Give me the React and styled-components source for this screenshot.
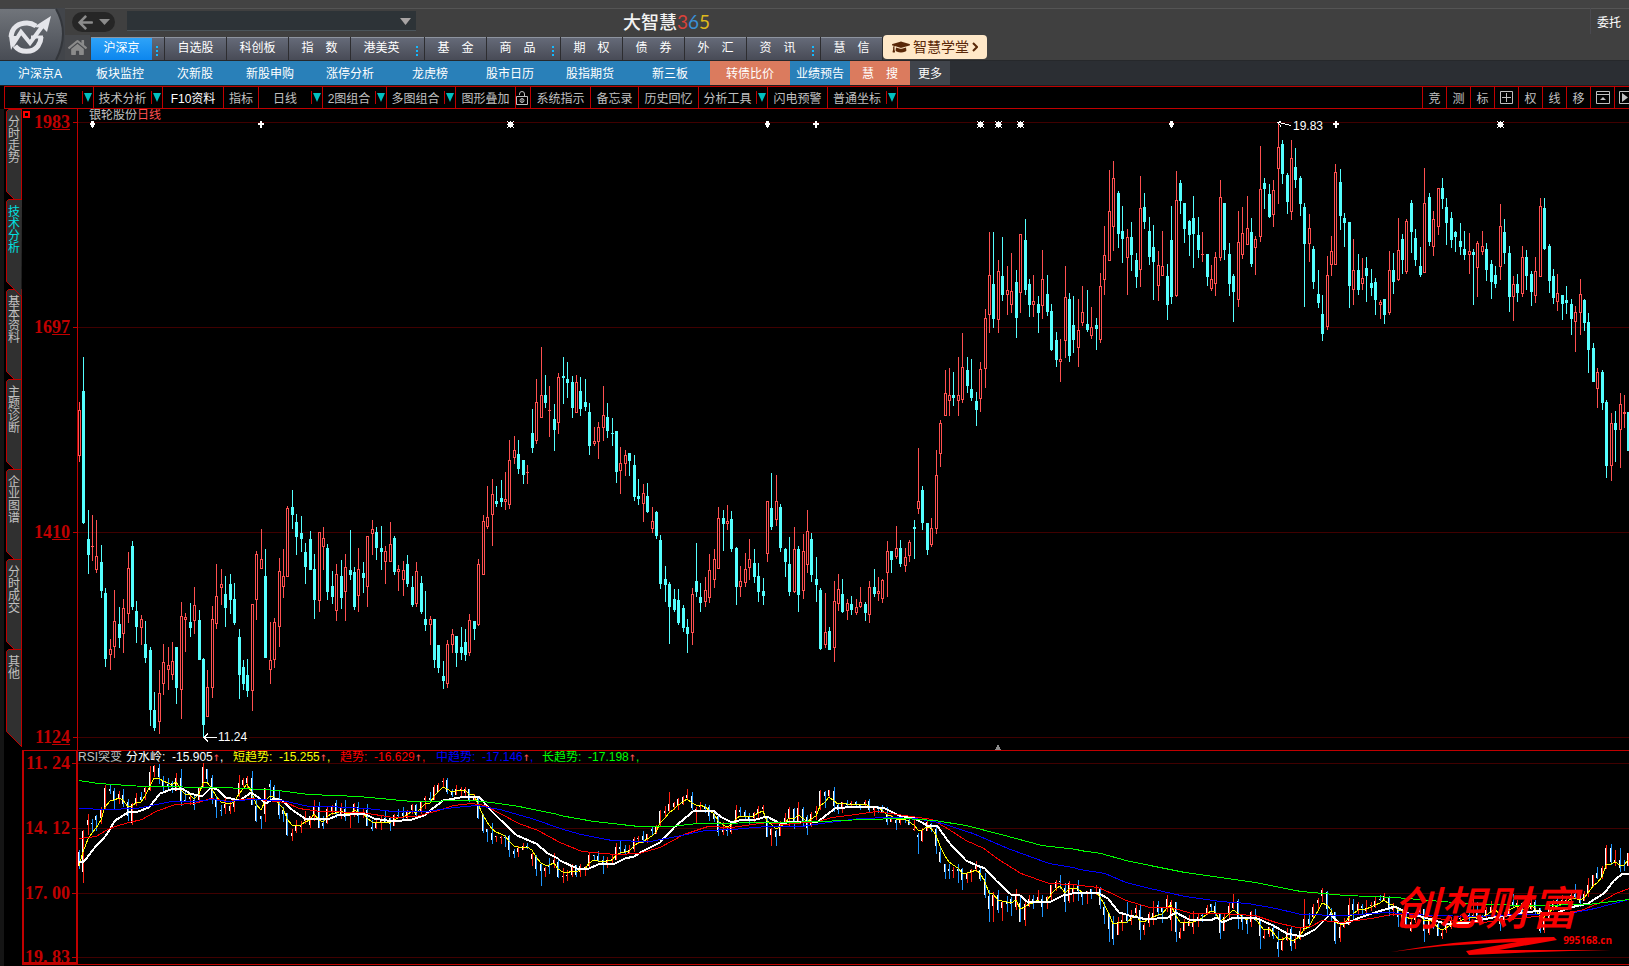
import React from "react";
import styled, { createGlobalStyle, css } from "styled-components";
import { FaArrowLeft, FaGraduationCap, FaHome } from "react-icons/fa";

const GlobalStyle = createGlobalStyle`
  * { box-sizing: border-box; }
  html, body { margin: 0; background: #000; }
  body, button, select {
    font-family: "Liberation Sans", "Noto Sans CJK SC", sans-serif;
    font-size: 12px;
  }
  button {
    margin: 0;
    padding: 0;
    border: 0;
    background: none;
    color: inherit;
    white-space: pre;
    cursor: pointer;
  }
  a { color: inherit; text-decoration: none; }
`;

const Page = styled.div`
  display: flex;
  flex-direction: column;
  height: 100vh;
  overflow: hidden;
  background: #000;
  color: #c0c0c0;
`;

/* ---------- header ---------- */

const Header = styled.header`
  display: flex;
  flex: none;
  height: 61px;
  padding-top: 8px;
  background: linear-gradient(#434343 8px, #555 8px, #555 9px, #404040 9px);
  border-bottom: 1px solid #26282b;
`;

const LogoLink = styled.a`
  flex: none;
  width: 65px;
  svg { display: block; }
`;

const HeaderMain = styled.div`
  flex: 1;
  display: flex;
  flex-direction: column;
  justify-content: space-between;
  min-width: 0;
`;

const TitleRow = styled.div`
  display: flex;
  align-items: center;
  height: 26px;
`;

const TitleLeft = styled.div`
  display: flex;
  align-items: center;
  gap: 12px;
  padding-left: 7px;
`;

const BackButton = styled.button`
  display: flex;
  align-items: center;
  justify-content: center;
  gap: 5px;
  width: 43px;
  height: 20px;
  margin-top: 2px;
  border-radius: 10px;
  background: #262626;
  color: #8c8c8c;
`;

const SearchSelect = styled.select`
  width: 289px;
  height: 20px;
  border: 0;
  border-bottom: 1px solid #4b555b;
  border-radius: 0;
  appearance: none;
  background: #2d3337;
  color: #ccc;
`;

const SearchBox = styled.div`
  display: flex;
  align-items: center;
  height: 20px;
  svg { margin-left: -16px; pointer-events: none; }
`;

const Brand = styled.h1`
  margin: 0 0 0 212px;
  color: #f2f2f2;
  font-family: "Noto Sans CJK SC", sans-serif;
  font-size: 18px;
  font-weight: 500;
  line-height: 26px;
`;

const BrandDigit = styled.span`
  color: ${({ $color }) => $color};
  font-family: Lato, sans-serif;
  font-size: 19px;
  font-weight: 400;
`;

const TradeButton = styled.button`
  margin-left: auto;
  height: 26px;
  padding: 0 8px 0 6px;
  border-left: 1px solid #4a4a50;
  color: #fff;
`;

const MarketTabs = styled.nav`
  display: flex;
  align-items: flex-end;
  gap: 1px;
  height: 26px;
`;

const HomeLink = styled.a`
  display: flex;
  align-items: center;
  justify-content: center;
  width: 25px;
  height: 25px;
  background: #46484c;
  color: #8b8b8b;
`;

const MarketTab = styled.button`
  display: flex;
  height: 23px;
  border-top: 1px solid #8d939f;
  background: linear-gradient(#656a78, #484b56);
  box-shadow: 1px 0 #2d2d30;
  color: #fff;
  line-height: 21px;
`;

const MarketName = styled.span`
  width: 61px;
  height: 22px;
  ${({ $active }) => $active && css`background: linear-gradient(#2ea3f8, #0c86ee);`}
`;

const MoreDots = styled.span`
  display: flex;
  flex-direction: column;
  gap: 2px;
  width: 12px;
  height: 22px;
  padding: 8px 0 0 4px;
  &::before, &::after, i {
    content: "";
    width: 2px;
    height: 2px;
    background: #14b9ff;
  }
`;

const SchoolLink = styled.a`
  display: flex;
  align-items: center;
  justify-content: center;
  gap: 3px;
  width: 104px;
  height: 24px;
  margin-bottom: 1px;
  border-radius: 4px;
  background: #ffe8c8;
  color: #5a2808;
  font-size: 14px;
  line-height: 24px;
`;

const SubNav = styled.nav`
  display: flex;
  flex: none;
  height: 25px;
  background: #2b2e33;
  border-bottom: 1px solid #1c1d1f;
`;

const subTones = { blue: "#2980b9", orange: "#db7b5e", gray: "#40444b" };

const SubLink = styled.a`
  width: ${({ $width }) => $width}px;
  padding-top: 1px;
  background: ${({ $tone }) => subTones[$tone]};
  color: #fff;
  line-height: 24px;
  text-align: center;
  white-space: pre;
`;

/* ---------- tool bar ---------- */

const ToolBar = styled.div`
  display: flex;
  flex: none;
  height: 23px;
  margin-left: 4px;
  border: solid #c00000;
  border-width: 1px 0 1px 1px;
`;

const Tool = styled.button`
  display: flex;
  flex: none;
  align-items: center;
  width: ${({ $width }) => $width}px;
  border-right: 1px solid #c00000;
  color: ${({ $bright }) => ($bright ? "#fff" : "#c0c0c0")};
  overflow: hidden;
`;

const ToolName = styled.span`
  flex: 1;
  text-align: center;
`;

const DropMark = styled.span`
  display: flex;
  align-items: center;
  width: 11px;
  height: 13px;
  padding-left: 1px;
  border-left: 1px solid #c00000;
`;

const SideTools = styled.div`
  display: flex;
  margin-left: auto;
  border-left: 1px solid #c00000;
`;

const SideTool = styled.button`
  display: flex;
  align-items: center;
  justify-content: ${({ $cut }) => ($cut ? "flex-start" : "center")};
  width: ${({ $cut }) => ($cut ? 14 : 24)}px;
  padding-left: ${({ $cut }) => ($cut ? 4 : 0)}px;
  border-right: ${({ $cut }) => ($cut ? 0 : 1)}px solid #c00000;
  overflow: hidden;
  svg { flex: none; }
`;

/* ---------- work area ---------- */

const Work = styled.main`
  display: flex;
  flex: 1;
  min-height: 0;
  border-left: 4px solid #151515;
  padding-left: 2px;
`;

const SideTabs = styled.nav`
  display: flex;
  flex: none;
  flex-direction: column;
  width: 16px;
`;

const SideTab = styled.button`
  position: relative;
  z-index: ${({ $active }) => ($active ? 1 : 0)};
  display: flex;
  flex: none;
  justify-content: center;
  width: 16px;
  height: 90px;
  padding-top: 7px;
  color: ${({ $active }) => ($active ? "#00e0e0" : "#c0c0c0")};
  span {
    position: relative;
    width: 12px;
    line-height: 12px;
    white-space: normal;
  }
`;

const TabShape = styled.svg`
  position: absolute;
  top: 0;
  left: 0;
`;

const Panes = styled.div`
  flex: 1;
  min-width: 0;
`;

const Pane = styled.section`
  display: grid;
  grid-template-columns: 56px 1fr;
  border-bottom: 1px solid #c00000;
`;

const Axis = styled.div`
  position: relative;
  border: solid #c00000;
  border-width: ${({ $boxed }) => ($boxed ? "0 2px 2px 2px" : "0 1px 0 0")};
`;

/* the labels sit on the price levels, so they hang free on the scale */
const AxisLabel = styled.div`
  position: absolute;
  right: ${({ $boxed }) => ($boxed ? 6 : 7)}px;
  display: flex;
  color: #c00000;
  font-family: "Liberation Serif", serif;
  font-size: 18px;
  font-weight: bold;
  line-height: 18px;
  &::after {
    content: "";
    position: absolute;
    top: 9px;
    right: ${({ $boxed }) => ($boxed ? -6 : -7)}px;
    width: 4px;
    height: 1px;
    background: #c00000;
  }
`;

const Cents = styled.span`
  height: 17px;
  border-bottom: 1px solid #c00000;
`;

const Dot = styled.span`width: 9px;`;

const PaneMark = styled.span`
  position: absolute;
  top: 2px;
  left: 1px;
  width: 7px;
  height: 7px;
  border: 2px solid #f00;
`;

const Plot = styled.div`
  position: relative;
  min-width: 0;
  overflow: hidden;
  svg { display: block; }
`;

const Legend = styled.div`
  display: flex;
  height: 12px;
  padding-left: ${({ $indent }) => $indent}px;
  line-height: 13px;
  white-space: nowrap;
`;

const LegendItem = styled.span`
  width: ${({ $width }) => $width}px;
  color: ${({ $color }) => $color};
`;

const Up = styled.span`color: #ff5050;`;

const UpArrow = styled(Up)`
  font-family: "DejaVu Sans Mono", monospace;
  line-height: 12px;
`;

const Watermark = styled.div`
  position: absolute;
  right: 12px;
  bottom: 8px;
  width: 228px;
  color: #f60000;
  strong {
    display: block;
    padding-left: 4px;
    font-family: "Noto Sans CJK SC", sans-serif;
    font-size: 46px;
    font-style: italic;
    font-weight: 500;
    line-height: 62px;
  }
  small {
    position: absolute;
    right: 5px;
    bottom: 10px;
    font-family: "Open Sans", sans-serif;
    font-size: 10px;
    font-weight: bold;
    line-height: 12px;
  }
`;

/* ---------- data ---------- */

const markets = [
  { name: "沪深京", more: true, active: true },
  { name: "自选股" },
  { name: "科创板" },
  { name: "指　数" },
  { name: "港美英", more: true },
  { name: "基　金" },
  { name: "商　品", more: true },
  { name: "期　权" },
  { name: "债　券" },
  { name: "外　汇" },
  { name: "资　讯", more: true },
  { name: "慧　信" },
];

const subLinks = [
  ["沪深京A", 80, "blue"],
  ["板块监控", 80, "blue"],
  ["次新股", 70, "blue"],
  ["新股申购", 80, "blue"],
  ["涨停分析", 80, "blue"],
  ["龙虎榜", 80, "blue"],
  ["股市日历", 80, "blue"],
  ["股指期货", 80, "blue"],
  ["新三板", 80, "blue"],
  ["转债比价", 80, "orange"],
  ["业绩预告", 60, "blue"],
  ["慧　搜", 60, "orange"],
  ["更多", 40, "gray"],
];

const tools = [
  { name: "默认方案", width: 89, drop: true },
  { name: "技术分析", width: 69, drop: true },
  { name: "F10资料", width: 61, bright: true },
  { name: "指标", width: 35 },
  { name: "日线", width: 64, drop: true },
  { name: "2图组合", width: 64, drop: true },
  { name: "多图组合", width: 69, drop: true },
  { name: "图形叠加", width: 60 },
  { name: "lock", width: 15 },
  { name: "系统指示", width: 60 },
  { name: "备忘录", width: 48 },
  { name: "历史回忆", width: 60 },
  { name: "分析工具", width: 69, drop: true },
  { name: "闪电预警", width: 60 },
  { name: "普通坐标", width: 70, drop: true },
];

const sideTabs = ["分时走势", "技术分析", "基本资料", "主题诊断", "企业图谱", "分时成交", "其他"];

const rsi = [
  ["分水岭", "-15.905", "#ffffff", 107],
  ["短趋势", "-15.255", "#ffff00", 107],
  ["趋势", "-16.629", "#ff0000", 96],
  ["中趋势", "-17.146", "#0000ff", 106],
  ["长趋势", "-17.198", "#00ff00", 107],
];

// Bars are: direction, high, body top, body bottom, low.
// Levels are in ticks (three to a pixel) counted from the block's base row.
const barBlocks = [
  [530, `r -384 -360 -223 -205;c -519 -417 -21 -18;c -60 27 75 131;r -45 48 51 93;r -30 78 119 128;
c 45 96 183 203;c 174 189 387 410;r 327 357 375 419;r 180 273 350 383;c 231 282 323 353;
r 207 234 312 368;r 66 114 251 278;c 33 48 231 239;c 213 243 291 338;r 255 267 293 344;
c 273 342 384 398;c 351 360 540 587;c 486 540 594 602;r 420 489 576 611;r 342 396 461 494;
r 351 405 419 479;r 336 393 434 449;c 351 351 474 521;r 216 258 479 566;r 249 261 269 365;
c 219 276 293 320;r 171 225 272 311;c 240 270 390 390;c 384 387 585 620;r 420 471 560 560;
r 228 267 473 503;r 102 198 281 296;r 117 162 174 224;c 138 192 234 290;c 132 162 210 251;
c 159 207 279 284;c 297 321 435 506;c 390 411 462 479;c 387 435 483 500;r 222 222 482 542;
r 63 72 209 269;r -3 87 116 116;c 57 138 384 384;r 276 390 419 461`],
  [320, `r 894 906 1020 1044;r 714 753 921 980;r 687 768 801 833;r 558 564 771 771;c 510 561 585 627;
c 582 606 651 705;c 588 639 657 696;c 669 696 741 792;c 633 657 750 750;c 702 747 840 897;
r 636 636 843 876;r 621 654 682 750;c 672 684 816 840;c 753 798 831 852;r 732 762 873 903;
c 720 768 834 867;r 702 741 816 903;c 630 750 765 780;c 741 756 861 870;r 684 747 828 876;
c 726 759 774 819;r 648 648 801 861;r 600 627 642 705;c 621 636 684 720;c 618 684 696 750;
r 678 693 726 792;r 606 672 726 726;c 648 654 756 765;r 735 747 756 813;r 723 750 780 828;
c 705 732 792 801;c 768 801 855 861;r 726 753 852 861;c 768 789 876 882;c 813 897 915 933;
r 888 897 915 975;c 897 897 1020 1044;c 975 975 1044 1059;c 1023 1068 1083 1107;r 960 972 1092 1104;
r 927 942 975 999;c 948 948 999 1041;c 921 981 999 1020;c 927 966 1005 1023;r 882 900 999 1008;
c 903 903 927 960;r 717 732 915 918;r 585 603 765 765;r 498 591 621 627;r 477 522 585 678;
c 498 543 552 561;c 480 534 546 561;r 456 537 546 570;r 360 420 555 567;r 348 390 414 432;
c 360 402 447 462;c 420 420 465 492;r 435 456 459 492;c 267 339 384 399;r 177 246 363 372;
r 81 225 294 294;c 165 225 249 264;r 198 270 273 351;c 252 297 330 393;r 159 171 309 342;
c 111 168 174 252;c 126 177 189 234;c 168 186 264 294;r 165 186 279 279;c 171 213 267 288;
c 177 246 261 273;c 249 276 378 405;r 321 363 372 378;r 306 321 366 417;r 198 285 324 363;
c 249 291 333 354;c 294 339 342 378;c 333 333 456 489;r 381 429 453 522;r 390 405 432 468;
c 399 399 423 468;c 405 435 531 543;c 477 528 537 555;r 492 519 552 606;c 489 528 576 579;
r 561 603 627 639;c 573 576 648 657;c 645 660 792 807;c 738 777 795 846;c 786 792 861 972;
c 807 837 870 876;c 807 840 909 915;c 855 864 924 936;c 897 921 942 999;
r 804 822 939 975;c 669 783 816 831;c 789 831 849 876;r 771 810 846 861;r 702 750 834 849;
r 687 717 780 804;r 561 594 747 747;c 570 594 612 693;r 555 603 612 630;c 573 597 687 696;
c 681 684 801 855;r 738 783 801 831;r 699 747 789 801;r 657 717 744 780;c 687 729 771 789;
c 729 768 816 846;c 774 813 828 855;r 543 543 702 726;c 459 564 621 630;r 465 543 600 618;
c 552 561 684 696;c 684 687 726 771;c 651 732 816 828;r 621 687 816 819;c 678 687 825 876;
r 642 693 813 837;r 570 633 735 759;c 639 657 765 786;c 711 777 795 846;c 804 810 987 990;
r 819 936 975 984;c 921 933 990 990;r 783 843 984 1026;r 762 807 852 873;c 777 822 876 879;
r 837 849 873 900;c 828 852 870 885;r 837 861 879 885;r 801 846 861 864;c 846 852 879 903;
r 783 801 885 909;c 747 801 822 831;r 771 813 822 843;r 777 780 837 849;r 663 693 759 831;
c 693 693 720 759;r 618 684 711 717;c 660 684 732 741;r 684 711 738 756;r 660 666 708 726;
c 600 621 627 717;r 384 543 567 582;c 498 510 609 630;c 609 609 690 705;r 594 624 675 681;
r 390 465 627 642;r 300 309 402 441;r 150 219 288 288;r 144 225 243 288;c 156 225 234 258;
r 111 225 243 288;r 39 141 240 249;c 111 150 198 219;c 117 207 234 243;c 216 243 270 318;
r 126 147 237 276`],
  [110, `r 597 624 777 833;r 366 495 615 669;c 366 522 627 654;r 450 483 630 669;c 381 498 555 573;
r 468 540 555 615;r 429 543 585 609;c 480 516 624 684;r 372 372 549 609;c 327 390 540 555;
c 507 522 585 621;r 495 573 585 621;c 558 582 609 669;r 420 507 588 627;c 495 552 606 618;
c 582 603 720 723;c 666 690 750 771;r 687 747 756 816;r 468 561 693 744;c 549 567 738 756;
c 558 645 690 729;r 567 660 714 771;r 528 606 639 648;c 540 642 660 666;r 591 651 678 687;
c 624 645 657 720;r 489 528 690 699;r 348 435 510 555;r 180 303 453 453;r 153 204 351 423;
c 243 249 372 414;c 288 363 387 459;r 357 381 444 555;c 336 381 435 483;c 429 450 501 534;
r 198 294 480 531;c 249 291 336 357;c 321 363 441 465;c 345 411 456 570;r 423 465 528 573;
r 363 468 498 498;c 462 498 585 630;c 288 390 561 582;r 183 270 558 561;c 210 219 273 312;
c 279 279 357 399;c 330 333 375 438;c 258 324 372 474;c 321 375 420 444;r 366 432 435 456;
c 432 432 501 528;r 465 507 537 543;r 426 441 522 558;r 210 261 444 453;c 279 279 420 450;
c 399 432 522 558;c 492 498 546 636;r 303 396 570 591;r 291 369 435 447;r 258 354 405 405;
c 324 366 462 471;r 378 387 414 495;r 108 237 381 396;c 204 219 237 297;c 222 252 321 324;
r 210 240 315 351;r 39 111 177 282;c 90 102 192 222;c 189 195 276 312;r 90 144 306 330;
c 114 171 210 234;c 198 204 282 318;c 279 291 402 591;r 312 354 402 456;c 408 417 516 537;
c 480 552 579 594;c 555 612 672 693;r 438 495 651 660;r 378 423 465 498;r 162 186 465 465;
c 177 216 318 360;c 309 324 339 411;c 336 336 528 594;r 387 480 540 585;c 432 480 540 555;
r 444 504 522 540;c 441 474 498 576;c 477 519 534 558;c 504 516 570 615;r 570 576 585 627;
c 567 567 615 642;r 423 480 609 615;c 429 480 516 552;r 324 420 510 513;c 372 387 450 492;
r 327 333 486 492;c 270 279 366 429;c 357 384 450 468;c 411 468 495 501;r 174 279 489 489;
c 249 261 396 408;r 303 327 411 438;r 234 234 351 375;c 204 234 267 297;c 264 291 339 405;
c 306 324 390 414;c 363 366 381 426;c 339 393 411 435;c 363 417 435 450;r 369 423 435 492;
c 417 426 435 585;r 393 399 474 561;r 363 408 426 435;c 399 417 480 513;c 450 462 516 567;
c 468 495 522 534;r 282 348 471 510;c 327 366 429 462;c 408 429 561 606;r 498 522 561 633;
c 492 522 549 576;r 408 441 552 561;c 420 441 498 540;c 483 492 546 588;r 441 483 558 579;
r 264 288 501 501;c 264 294 417 420;c 402 408 513 549;c 477 498 564 582;r 492 549 576 603;
c 555 555 582 630;c 528 570 579 612;c 567 582 627 675;r 588 606 636 726;r 507 552 609 675;
c 567 570 639 663;c 609 636 720 789;c 699 714 816 816;r 774 786 837 894;c 780 786 879 900;
c 870 876 1068 1104;r 909 939 1068 1113;c 903 939 960 1056;r 849 882 960 1074;r 855 906 911 954;
c 906 906 1023 1023`],
];

const PRICE_TOP = 121; // window row where the price plot starts
const PLOT_LEFT = 78;

const bars = barBlocks
  .flatMap(([base, text]) =>
    text.split(";").map((row) => {
      const [dir, ...levels] = row.trim().split(" ");
      const [high, top, bottom, low] = levels.map((v) => Math.round(base + v / 3) - PRICE_TOP);
      return { rising: dir === "r", high, top, bottom, low };
    })
  )
  .map((bar, i) => ({ ...bar, x: Math.floor(79.22 + i * 4.4405) - PLOT_LEFT }));

// Trend lines of the lower pane, in blocks of [left edge, ticks per pixel, points].
const trendLines = [
  {
    color: "#00ff00",
    width: 1,
    blocks: [
      [60, 2.613, "50,121 100,130 220,139 420,140 480,145 570,149 650,161 780,168 920,184 1080,181 1130,186 1200,198 1300,222"],
      [560, 2.904, "0,225 100,242 230,258 320,258 400,248 640,246 760,244 880,236 1000,234 1090,240 1180,256 1280,282 1400,315 1500,328"],
      [1080, 2.856, "0,330 60,340 130,360 200,376 300,395 400,412 500,426 630,454 760,466 900,470 1000,479 1140,492 1300,496 1450,492 1568,478"],
    ],
  },
  {
    color: "#0000ff",
    width: 1,
    blocks: [
      [60, 2.613, "50,203 120,208 200,203 290,184 350,183 400,178 440,182 500,177 580,181 650,197 700,199 800,205 870,214 960,213 1030,200 1090,196 1150,208 1240,237"],
      [560, 2.904, "0,265 60,283 150,301 260,304 340,287 420,270 500,266 600,259 700,258 780,246 870,234 960,232 1030,235 1100,245 1200,280 1300,325 1420,368 1490,380"],
      [1080, 2.856, "0,386 70,400 130,427 200,445 300,467 400,483 480,488 560,505 630,523 750,524 880,516 1000,524 1130,528 1250,523 1400,520 1470,505 1568,478"],
    ],
  },
  {
    color: "#ff0000",
    width: 1,
    blocks: [
      [60, 2.613, "50,295 95,288 120,270 145,257 180,245 215,236 250,212 300,192 350,188 395,175 440,182 500,174 540,180 590,187 625,205 680,213 790,216 870,230 930,228 980,212 1030,196 1075,190 1110,195 1150,220 1200,248 1250,270"],
      [560, 2.904, "0,307 65,332 100,335 160,342 230,338 290,320 360,283 430,258 500,260 560,252 600,246 650,252 750,243 790,230 860,222 920,214 980,222 1080,238 1130,268 1180,300 1230,325 1270,355 1340,400 1420,430 1490,433"],
      [1080, 2.856, "0,436 50,440 90,460 130,480 200,500 260,500 320,518 400,518 500,525 560,545 620,560 660,557 690,540 750,547 830,535 890,522 960,520 1050,540 1150,545 1250,535 1350,522 1430,510 1480,490 1530,460 1568,445"],
    ],
  },
  {
    color: "#ffffff",
    width: 2,
    blocks: [
      [60, 2.613, "50,362 64,362 90,325 120,285 143,240 178,215 205,214 232,200 262,158 290,147 318,145 340,158 370,167 395,142 410,148 435,172 470,181 500,155 515,168 537,188 560,175 580,180 610,210 640,234 700,238 725,226 795,218 820,235 870,243 920,238 950,225 1000,180 1060,168 1095,167 1120,205 1150,238 1195,285 1245,308 1275,340 1300,354"],
      [560, 2.904, "0,360 50,384 85,384 110,372 160,370 190,355 215,348 245,330 290,305 335,258 385,213 445,211 470,230 500,245 530,238 570,236 600,228 640,250 680,242 750,242 800,205 860,198 900,199 945,203 985,225 1030,235 1065,254 1095,256 1130,305 1180,360 1210,374 1235,383 1265,420 1310,462 1335,466 1355,484 1420,487 1460,465 1500,457"],
      [1080, 2.856, "0,457 55,460 80,475 110,515 140,526 190,537 250,532 275,515 310,538 370,540 390,530 405,545 440,532 500,530 550,555 590,580 635,587 670,568 715,523 740,545 765,545 800,530 850,513 900,498 940,520 985,530 1050,553 1110,547 1180,532 1240,522 1310,510 1330,524 1365,515 1400,502 1450,490 1500,455 1525,420 1550,400 1568,398"],
    ],
  },
];

const toPoints = (blocks) =>
  blocks
    .flatMap(([left, scale, text]) =>
      text.split(" ").map((pair) => {
        const [x, y] = pair.split(",").map(Number);
        return `${Math.round(left + x / scale - PLOT_LEFT)},${Math.round(y / 3 - 23) + 0.5}`;
      })
    )
    .join(" ");

// The lower pane is the price turned upside down.
const flip = (y) => Math.round(((616 - y) * 194) / 615);

const shortTrend = () => {
  let avg = null;
  return bars
    .map((bar) => {
      const close = flip(bar.rising ? bar.top : bar.bottom);
      avg = avg === null ? close : avg + (close - avg) * 0.4;
      return `${bar.x},${Math.round(avg)}`;
    })
    .join(" ");
};

/* ---------- drawings ---------- */

const Logo = () => (
  <svg width="65" height="52" viewBox="0 8 65 52" aria-hidden="true">
    <defs>
      <linearGradient id="plate" x1="0" y1="0" x2="0" y2="1">
        <stop offset="0" stopColor="#71757b" />
        <stop offset="1" stopColor="#484c54" />
      </linearGradient>
    </defs>
    <path d="M0 8H65V60H0Z" fill="#42454a" />
    <path d="M0 9H56Q70 33 56 60H0Z" fill="url(#plate)" />
    <path d="M56 9Q70 33 56 60" fill="none" stroke="#33363b" strokeWidth="2" />
    <g fill="none" stroke="#e4e5ea" strokeWidth="5">
      <path d="M11 37C12 27 19 23 27 23C31 23 33 24 36 26" />
      <path d="M15 46C20 53 33 53 38 46C40 43 41 40 41 37" />
      <path d="M12 46L21 32L30 43L44 24" strokeWidth="4" />
      <path d="M31 37H43" strokeWidth="3" />
    </g>
    <path d="M51 16L47 32L43 28L34 27L40 23Z" fill="#e4e5ea" />
    <path d="M9 36L18 36L11 50Z" fill="#e4e5ea" />
  </svg>
);

const Caret = ({ color, width = 8, height = 8 }) => (
  <svg width={width} height={height} aria-hidden="true">
    <path d={`M0 0H${width}L${width / 2} ${height}Z`} fill={color} />
  </svg>
);

const LockIcon = () => (
  <svg width="12" height="14" viewBox="0 0 12 14" fill="none" stroke="#c0c0c0" aria-hidden="true">
    <path d="M3.5 4V3Q3.5 0.5 6 0.5T8.5 3V6M0.5 5.5H11.5V13.5H0.5Z" />
    <circle cx="6" cy="9.5" r="2" />
    <path d="M6 8V11" />
  </svg>
);

const PlusBox = () => (
  <svg width="13" height="13" fill="none" stroke="#c0c0c0" aria-hidden="true">
    <path d="M0.5 0.5H12.5V12.5H0.5ZM6.5 2V11M2 6.5H11" />
  </svg>
);

const PanelBox = () => (
  <svg width="14" height="13" aria-hidden="true">
    <path d="M0.5 0.5H13.5V12.5H0.5ZM1 3.5H13" fill="none" stroke="#c0c0c0" />
    <path d="M4 9L7 6L10 9Z" fill="#c0c0c0" />
  </svg>
);

const PlayBox = () => (
  <svg width="14" height="13" aria-hidden="true">
    <path d="M0.5 0.5H13.5V12.5H0.5Z" fill="none" stroke="#c0c0c0" />
    <path d="M3 2L9 6.5L3 11Z" fill="#c0c0c0" />
  </svg>
);

const markShapes = {
  star: "M-2 -2H3V3H-2ZM-3 -3H-2V-2H-3ZM3 -3H4V-2H3ZM-3 3H-2V4H-3ZM3 3H4V4H3ZM0 -3H1V4H0ZM-3 0H4V1H-3Z",
  plus: "M0 -4H2V4H0ZM-2 -1H4V1H-2Z",
  drop: "M0 -4H1V4H0ZM-1 -3H2V3H-1ZM-2 -1H3V1H-2Z",
};

const marks = [
  ["drop", 92], ["plus", 260], ["star", 510], ["drop", 767], ["plus", 815], ["star", 980],
  ["star", 998], ["star", 1020], ["drop", 1171], ["plus", 1335], ["star", 1500],
];

const dayTicks = [79, 83, 96, 119, 141, 159, 181, 203, 225, 252, 292, 327, 363, 394, 425, 456, 487, 519, 560, 576, 598, 622, 643, 665, 687, 709, 732, 749, 772, 796, 816, 847, 869, 892, 914, 937, 958, 980, 1016, 1038, 1060, 1083, 1105, 1127, 1149, 1171, 1190, 1216, 1238, 1260, 1282, 1300, 1322, 1345, 1367, 1389, 1433, 1455, 1480, 1500, 1522, 1544, 1562, 1584, 1607];

const PriceChart = () => (
  <svg width="100%" height="629" shapeRendering="crispEdges" role="img" aria-label="日线">
    {[1, 206, 411, 616].map((y) => (
      <rect key={y} x="0" y={y} width="100%" height="1" fill="#400000" />
    ))}
    {bars.map((bar, i) => {
      const { x, high, top, bottom, low } = bar;
      const height = Math.max(bottom - top, 1);
      return bar.rising ? (
        <g key={i} fill="#ff5050">
          <rect x={x} y={high} width="1" height={top - high} />
          <rect x={x} y={bottom} width="1" height={Math.max(low - bottom, 0)} />
          {height < 3 ? (
            <rect x={x - 1} y={top} width="3" height={height} />
          ) : (
            <rect x={x - 0.5} y={top + 0.5} width="2" height={height - 1} fill="#000" stroke="#ff5050" />
          )}
        </g>
      ) : (
        <g key={i} fill="#54ffff">
          <rect x={x} y={high} width="1" height={low - high} />
          <rect x={x - 1} y={top} width="3" height={height} />
        </g>
      );
    })}
    {marks.map(([kind, x]) => (
      <path key={x} d={markShapes[kind]} transform={`translate(${x - PLOT_LEFT} 3)`} fill="#fff" />
    ))}
    <g fill="none" stroke="#fff">
      <path d="M126 616.5H139M130 612.5L126 616.5L130 620.5" />
      <path d="M1201 1.5L1213 4.5M1204 -1L1200 1.5L1203 5.5" />
    </g>
    <rect x="1214" y="0" width="31" height="9" fill="#000" />
    <rect x="139" y="611" width="32" height="11" fill="#000" />
    <g fill="#fff" fontSize="12">
      <text x="140" y="620">11.24</text>
      <text x="1215" y="9">19.83</text>
    </g>
    <path d="M917 629L920 623L923 629Z" fill="#8c8c8c" />
  </svg>
);

const RsiChart = () => (
  <svg width="100%" height="201" shapeRendering="crispEdges" role="img" aria-label="RSI突变">
    {[0, 65, 130, 194].map((y) => (
      <rect key={y} x="0" y={y} width="100%" height="1" fill="#400000" />
    ))}
    {bars.map((bar, i) => {
      const top = flip(bar.bottom);
      return (
        <g key={i} fill={bar.rising ? "#1e96ff" : "#ff2010"}>
          <rect x={bar.x} y={flip(bar.low)} width="1" height={Math.max(flip(bar.high) - flip(bar.low), 1)} />
          <rect x={bar.x - 1} y={top} width="1" height={Math.max(flip(bar.top) - top, 1)} fill="#fff" />
        </g>
      );
    })}
    <polyline points={shortTrend()} fill="none" stroke="#ffff00" />
    {[...trendLines].reverse().map((line) => (
      <polyline key={line.color} points={toPoints(line.blocks)} fill="none" stroke={line.color} strokeWidth={line.width} />
    ))}
  </svg>
);

/* ---------- page ---------- */

const App = () => {
  return (
    <Page>
      <GlobalStyle />
      <Header>
        <LogoLink href="#" aria-label="大智慧"><Logo /></LogoLink>
        <HeaderMain>
          <TitleRow>
            <TitleLeft>
              <BackButton aria-label="返回">
                <FaArrowLeft size={17} />
                <Caret color="#8c8c8c" width={11} height={6} />
              </BackButton>
              <SearchBox>
                <SearchSelect aria-label="搜索" defaultValue="">
                  <option value=""></option>
                </SearchSelect>
                <Caret color="#a8a4a4" width={11} height={7} />
              </SearchBox>
            </TitleLeft>
            <Brand>
              大智慧
              <BrandDigit $color="#d9423a">3</BrandDigit>
              <BrandDigit $color="#3a8fd6">6</BrandDigit>
              <BrandDigit $color="#dfb91c">5</BrandDigit>
            </Brand>
            <TradeButton>委托</TradeButton>
          </TitleRow>
          <MarketTabs>
            <HomeLink href="#" aria-label="首页"><FaHome size={19} /></HomeLink>
            {markets.map((market) => (
              <MarketTab key={market.name}>
                <MarketName $active={market.active}>{market.name}</MarketName>
                {market.more && <MoreDots><i /></MoreDots>}
              </MarketTab>
            ))}
            <SchoolLink href="#">
              <FaGraduationCap size={18} />
              智慧学堂
              <svg width="6" height="10" fill="none" stroke="#5a2808" strokeWidth="2" aria-hidden="true">
                <path d="M1 1L5 5L1 9" />
              </svg>
            </SchoolLink>
          </MarketTabs>
        </HeaderMain>
      </Header>

      <SubNav>
        {subLinks.map(([name, width, tone]) => (
          <SubLink key={name} href="#" $width={width} $tone={tone}>{name}</SubLink>
        ))}
      </SubNav>

      <ToolBar>
        {tools.map((tool) => (
          <Tool key={tool.name} $width={tool.width} $bright={tool.bright} aria-label={tool.name}>
            {tool.name === "lock" ? <LockIcon /> : <ToolName>{tool.name}</ToolName>}
            {tool.drop && <DropMark><Caret color="#00c0c0" width={8} height={9} /></DropMark>}
          </Tool>
        ))}
        <SideTools>
          <SideTool>竞</SideTool>
          <SideTool>测</SideTool>
          <SideTool>标</SideTool>
          <SideTool aria-label="加"><PlusBox /></SideTool>
          <SideTool>权</SideTool>
          <SideTool>线</SideTool>
          <SideTool>移</SideTool>
          <SideTool aria-label="面板"><PanelBox /></SideTool>
          <SideTool $cut aria-label="播放"><PlayBox /></SideTool>
        </SideTools>
      </ToolBar>

      <Work>
        <SideTabs>
          {sideTabs.map((name) => {
            const active = name === "技术分析";
            return (
              <SideTab key={name} $active={active}>
                <TabShape width="16" height="98" aria-hidden="true">
                  <path d="M16 0.5H2.5L0.5 2.5V82.5L15.5 97.5" fill="#303030" stroke="#c00000" />
                  {!active && <path d="M15.5 0V98" stroke="#c00000" />}
                </TabShape>
                <span>{name}</span>
              </SideTab>
            );
          })}
        </SideTabs>
        <Panes>
          <Pane>
            <Axis>
              <PaneMark />
              {[[19, 83, 4], [16, 97, 209], [14, 10, 414], [11, 24, 619]].map(([yuan, cents, top]) => (
                <AxisLabel key={top} style={{ top }}>{yuan}<Cents>{cents}</Cents></AxisLabel>
              ))}
            </Axis>
            <Plot>
              <Legend $indent={11}>
                <span>银轮股份</span>
                <Up>日线</Up>
              </Legend>
              <PriceChart />
            </Plot>
          </Pane>
          <Pane>
            <Axis $boxed>
              {[[11, 24, 3], [14, 12, 68], [17, "00", 133], [19, 83, 197]].map(([yuan, cents, top]) => (
                <AxisLabel key={top} $boxed style={{ top }}>{yuan}<Dot>.</Dot>{cents}</AxisLabel>
              ))}
            </Axis>
            <Plot>
              <Legend>
                <LegendItem $width={48}>RSI突变</LegendItem>
                {rsi.map(([name, value, color, width]) => (
                  <LegendItem key={name} $color={color} $width={width}>
                    {name}:&nbsp; {value}<UpArrow>↑</UpArrow>,
                  </LegendItem>
                ))}
              </Legend>
              <RsiChart />
              <Watermark>
                <strong>创想财富</strong>
                <svg width="228" height="20" aria-hidden="true">
                  <path d="M2 16Q80 2 165 1L168 4L110 14L222 14Q160 15 80 19L77 15L128 6Q60 8 2 16Z" fill="#f60000" />
                </svg>
                <small>995168.cn</small>
              </Watermark>
            </Plot>
          </Pane>
          <svg width="100%" height="2" aria-hidden="true">
            {dayTicks.map((x) => (
              <rect key={x} x={x - 22} y="0" width="1" height="1" fill="#c00000" />
            ))}
          </svg>
        </Panes>
      </Work>
    </Page>
  );
};

export default App;
